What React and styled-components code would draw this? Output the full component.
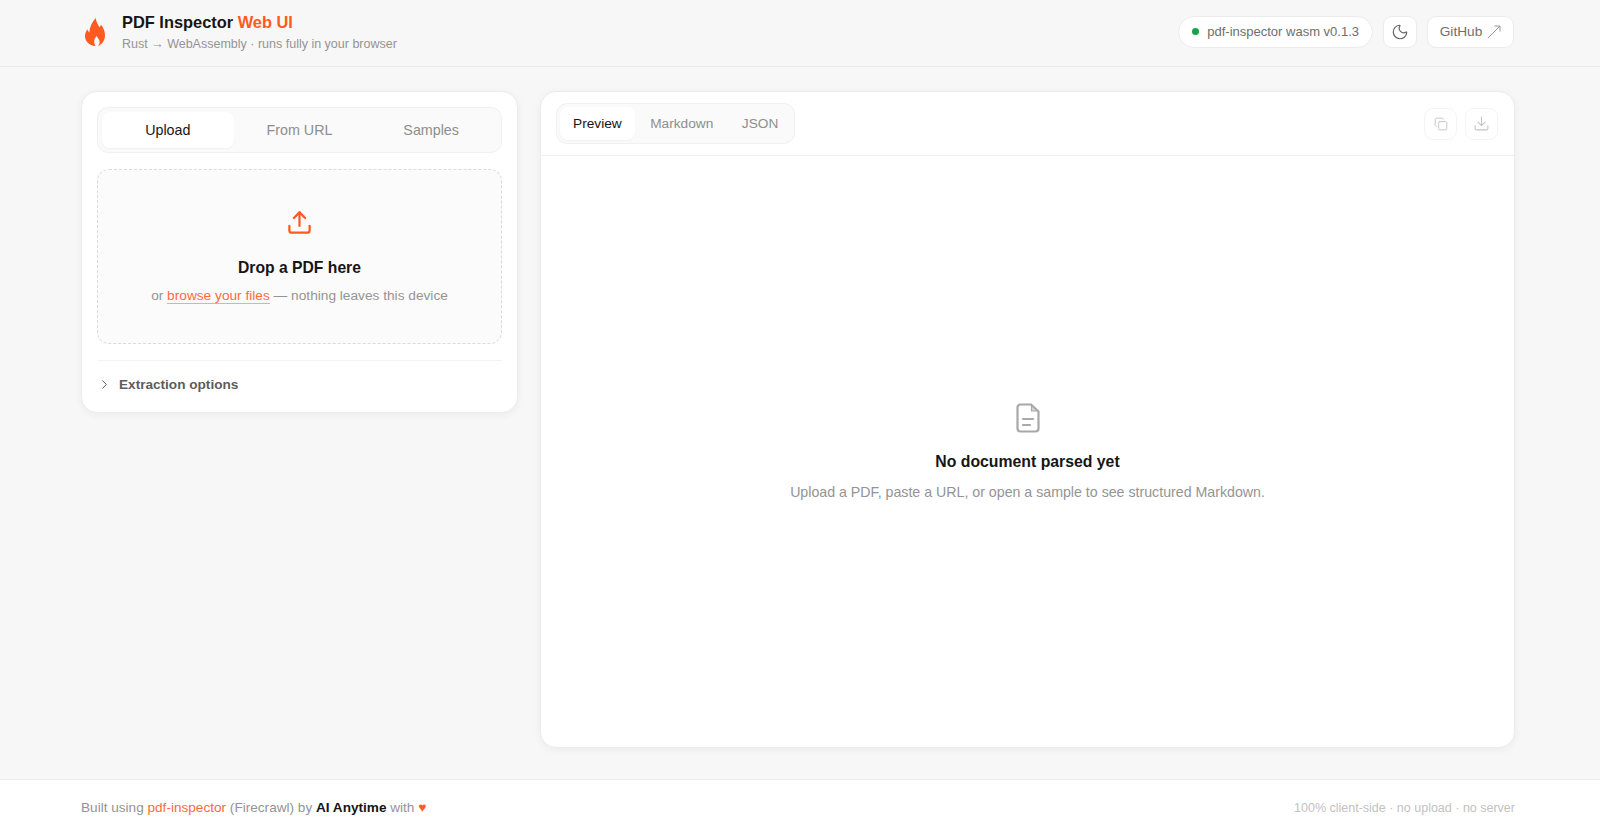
import React, { useState } from "react";
import styled, { createGlobalStyle } from "styled-components";
import { Moon, Copy, Download, Upload, ChevronRight } from "lucide-react";

const GlobalStyle = createGlobalStyle`
  * { box-sizing: border-box; }
  html, body { margin: 0; padding: 0; height: 100%; }
  body {
    background: #f7f7f7;
    color: #111;
    font-family: "Liberation Sans", Arial, sans-serif;
    -webkit-font-smoothing: antialiased;
  }
  #root { height: 100%; }
`;

const Page = styled.div`
  display: flex;
  flex-direction: column;
  height: 833px;
`;

const Header = styled.header`
  height: 67px;
  flex: none;
  display: flex;
  align-items: center;
  justify-content: space-between;
  padding: 0 86px 2px 85px;
  border-bottom: 1px solid #e9e9e9;
`;

const Brand = styled.div`
  display: flex;
  align-items: center;
  gap: 17px;
`;

const BrandText = styled.div`
  display: flex;
  flex-direction: column;
  gap: 5px;
`;

const Title = styled.div`
  font-size: 16.4px;
  line-height: 20px;
  font-weight: 700;
  color: #161616;
`;

const Accent = styled.span`
  color: #ff5a1f;
`;

const Subtitle = styled.div`
  font-size: 12.5px;
  line-height: 15px;
  color: #949494;
`;

const HeaderActions = styled.div`
  display: flex;
  align-items: center;
  gap: 10px;
  margin-bottom: 1px;
`;

const Pill = styled.div`
  height: 32px;
  display: flex;
  align-items: center;
  gap: 8px;
  padding: 0 13px;
  background: #fff;
  border: 1px solid #ececec;
  border-radius: 16px;
  font-size: 13px;
  color: #6e6e6e;
`;

const Dot = styled.span`
  width: 7px;
  height: 7px;
  border-radius: 50%;
  background: #16a34a;
`;

const IconButton = styled.button`
  width: ${(p) => (p.faded ? 33 : 34)}px;
  height: 32px;
  padding: 0;
  display: flex;
  align-items: center;
  justify-content: center;
  background: #fff;
  border: 1px solid ${(p) => (p.faded ? "#f4f4f4" : "#ececec")};
  border-radius: 9px;
  color: ${(p) => (p.faded ? "#c4c4c4" : "#666")};
`;

const GithubLink = styled.a`
  height: 32px;
  width: 87px;
  display: flex;
  align-items: center;
  justify-content: center;
  gap: 5px;
  background: #fff;
  border: 1px solid #ececec;
  border-radius: 9px;
  font-size: 13.7px;
  color: #6e6e6e;
  text-decoration: none;
`;

const Main = styled.main`
  flex: 1;
  display: grid;
  grid-template-columns: 437px 1fr;
  gap: 22px;
  align-items: start;
  padding: 24px 85px 31px 81px;
`;

const Card = styled.section`
  background: #fff;
  border: 1px solid #ececec;
  border-radius: 16px;
  box-shadow: 0 2px 8px rgba(0, 0, 0, 0.05);
`;

const LeftCard = styled(Card)`
  padding: 15px;
  height: 322px;
`;

const RightCard = styled(Card)`
  height: 657px;
  display: flex;
  flex-direction: column;
`;

const TabBar = styled.div`
  display: ${(p) => (p.fit ? "inline-flex" : "grid")};
  grid-template-columns: repeat(3, 1fr);
  align-items: stretch;
  gap: ${(p) => (p.fit ? "2.5px" : "0")};
  padding: ${(p) => (p.fit ? "3px" : "4px")};
  height: ${(p) => (p.fit ? 41 : 46)}px;
  background: #fafafa;
  border: 1px solid #f0f0f0;
  border-radius: 11px;
`;

const Tab = styled.button`
  border: 0;
  padding: ${(p) => (p.compact ? "0 13px" : "0")};
  background: ${(p) => (p.active ? "#fff" : "transparent")};
  border-radius: 8px;
  box-shadow: ${(p) => (p.active ? "0 1px 2px rgba(0,0,0,.04)" : "none")};
  font-family: inherit;
  font-size: ${(p) => (p.compact ? 13.7 : 14.3)}px;
  color: ${(p) => (p.active ? "#161616" : "#8e8e8e")};
`;

const DropZone = styled.div`
  margin-top: 16px;
  height: 175px;
  display: flex;
  flex-direction: column;
  align-items: center;
  padding-top: 39px;
  background: #fbfbfb;
  border: 1px dashed #dcdcdc;
  border-radius: 12px;
  color: #ff5a1f;
`;

const DropTitle = styled.div`
  margin-top: 22px;
  font-size: 15.7px;
  line-height: 20px;
  font-weight: 700;
  color: #161616;
`;

const DropHint = styled.div`
  margin-top: 9px;
  font-size: 13.7px;
  line-height: 18px;
  color: #949494;
`;

const BrowseLink = styled.a`
  color: #ff6a3d;
  text-decoration: none;
  border-bottom: 1px solid #ffa78c;
`;

const Options = styled.div`
  margin-top: 16px;
  padding-top: 16px;
  display: flex;
  align-items: center;
  gap: 7px;
  border-top: 1px solid #f3f3f3;
  font-size: 13.6px;
  font-weight: 700;
  color: #5c5c5c;
`;

const PreviewBar = styled.div`
  height: 64px;
  flex: none;
  display: flex;
  align-items: center;
  justify-content: space-between;
  padding: 0 16px 0 15px;
  border-bottom: 1px solid #efefef;
`;

const ToolButtons = styled.div`
  display: flex;
  gap: 8px;
`;

const Empty = styled.div`
  flex: 1;
  display: flex;
  flex-direction: column;
  align-items: center;
  padding-top: 247px;
`;

const EmptyTitle = styled.div`
  margin-top: 19px;
  font-size: 15.8px;
  line-height: 20px;
  font-weight: 700;
  color: #161616;
`;

const EmptyHint = styled.div`
  margin-top: 11px;
  font-size: 14.2px;
  line-height: 18px;
  color: #949494;
`;

const Footer = styled.footer`
  height: 54px;
  flex: none;
  display: flex;
  align-items: center;
  justify-content: space-between;
  padding: 2px 85px 0 81px;
  background: #fff;
  border-top: 1px solid #ececec;
  font-size: 13.6px;
  color: #949494;
`;

const FooterLink = styled.a`
  color: #ff6a3d;
  text-decoration: none;
`;

const Strong = styled.strong`
  color: #161616;
`;

const FooterNote = styled.div`
  font-size: 12.5px;
  color: #c2c2c2;
`;

const FlameIcon = () => (
  <svg width="20" height="28" viewBox="0 0 20 28" fill="#ff5a1f">
    <path d="M10.8 0C11.2 4 12.8 6.5 14.6 9.2C15.2 8.6 15.7 7.8 16 6.8C18.4 9.8 20 13.2 20 17.2C20 22.6 16.6 26.8 13 28C15 25.8 15 23.6 14 21.8C13.4 20.8 12.4 19.6 11.6 18C10.4 19.6 9.4 21 9.2 23C9 25 9.8 26.8 10.6 28C4 27.4 0 23 0 18.2C0 15.4 1 13 2.4 11.2C2.8 12.6 3.4 13.6 4.4 14.4C4.6 9 7.4 3.6 10.8 0z" />
  </svg>
);

const DocIcon = () => (
  <svg width="24" height="30" viewBox="0 0 24 30" fill="none" stroke="#a8a8a8" strokeWidth="2.2" strokeLinecap="round" strokeLinejoin="round">
    <path d="M15 1.5H4.5a3 3 0 0 0-3 3v21a3 3 0 0 0 3 3h15a3 3 0 0 0 3-3V8.5z" />
    <path d="M15.5 2.5v5.5h6z" fill="#d8d8d8" strokeWidth="1.2" />
    <path d="M7 16h10" />
    <path d="M7 22h7" />
  </svg>
);

const ExternalArrow = () => (
  <svg width="14" height="14" viewBox="0 0 14 14" fill="none" stroke="#8e8e8e" strokeWidth="0.9">
    <path d="M1 13L13 1" />
    <path d="M7.5 1H13V6.5" />
  </svg>
);

export default function App() {
  const [tab] = useState("Upload");
  const [view] = useState("Preview");

  return (
    <Page>
      <GlobalStyle />
      <Header>
        <Brand>
          <FlameIcon />
          <BrandText>
            <Title>
              PDF Inspector <Accent>Web UI</Accent>
            </Title>
            <Subtitle>Rust → WebAssembly · runs fully in your browser</Subtitle>
          </BrandText>
        </Brand>
        <HeaderActions>
          <Pill>
            <Dot />
            pdf-inspector wasm v0.1.3
          </Pill>
          <IconButton>
            <Moon size={18} strokeWidth={1.6} />
          </IconButton>
          <GithubLink href="#">
            GitHub
            <ExternalArrow />
          </GithubLink>
        </HeaderActions>
      </Header>

      <Main>
        <LeftCard>
          <TabBar>
            {["Upload", "From URL", "Samples"].map((name) => (
              <Tab key={name} active={tab === name}>{name}</Tab>
            ))}
          </TabBar>
          <DropZone>
            <Upload size={27} strokeWidth={2} />
            <DropTitle>Drop a PDF here</DropTitle>
            <DropHint>
              or <BrowseLink href="#">browse your files</BrowseLink> — nothing leaves this device
            </DropHint>
          </DropZone>
          <Options>
            <ChevronRight size={15} strokeWidth={1.6} />
            Extraction options
          </Options>
        </LeftCard>

        <RightCard>
          <PreviewBar>
            <TabBar fit>
              {["Preview", "Markdown", "JSON"].map((name) => (
                <Tab key={name} compact active={view === name}>{name}</Tab>
              ))}
            </TabBar>
            <ToolButtons>
              <IconButton faded>
                <Copy size={14} strokeWidth={1.6} />
              </IconButton>
              <IconButton faded>
                <Download size={17} strokeWidth={1.5} />
              </IconButton>
            </ToolButtons>
          </PreviewBar>
          <Empty>
            <DocIcon />
            <EmptyTitle>No document parsed yet</EmptyTitle>
            <EmptyHint>Upload a PDF, paste a URL, or open a sample to see structured Markdown.</EmptyHint>
          </Empty>
        </RightCard>
      </Main>

      <Footer>
        <div>
          Built using <FooterLink href="#">pdf-inspector</FooterLink> (Firecrawl) by <Strong>AI Anytime</Strong> with <Accent>♥</Accent>
        </div>
        <FooterNote>100% client-side · no upload · no server</FooterNote>
      </Footer>
    </Page>
  );
}
